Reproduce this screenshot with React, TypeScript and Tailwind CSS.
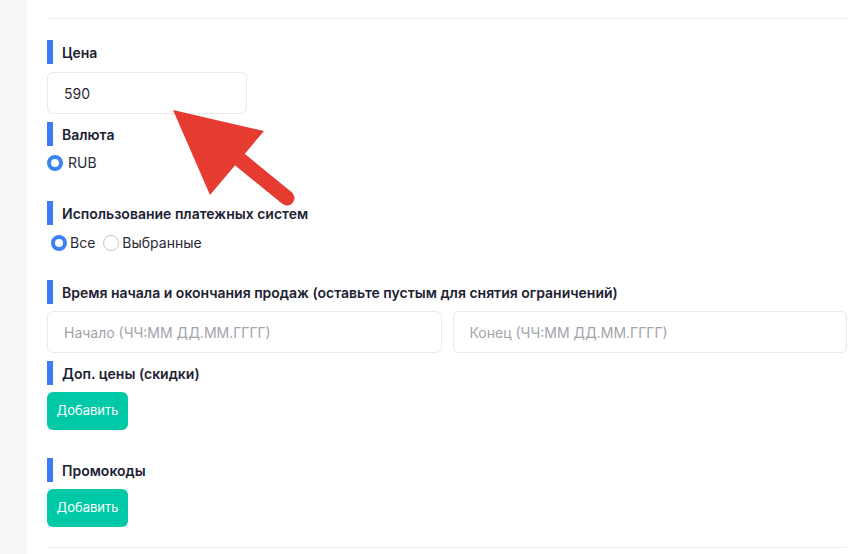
import React from "react";

function Label({ children }: { children: React.ReactNode }) {
  return (
    <div className="flex items-center h-[24px]">
      <div className="w-[6px] h-[24px] bg-[#3b7cf6]" />
      <span className="ml-[9px] mt-[1px] text-[14px] font-semibold text-[#1d2233] leading-none">{children}</span>
    </div>
  );
}

function Radio({ checked }: { checked: boolean }) {
  return checked ? (
    <span className="inline-block w-[16px] h-[16px] rounded-full border-[4px] border-[#3b82f6] bg-white box-border" />
  ) : (
    <span className="inline-block w-[16px] h-[16px] rounded-full border border-[#c8c8cc] bg-white box-border" />
  );
}

function Btn() {
  return (
    <button className="h-[38px] w-[81px] rounded-[6px] bg-[#00c9a7] text-white text-[13px] flex items-center justify-center">
      Добавить
    </button>
  );
}

export default function App() {
  return (
    <div
      className="relative flex w-[864px] h-[554px] overflow-hidden bg-white"
      style={{ fontFamily: "Inter, 'Noto Sans', sans-serif" }}
    >
      <div className="w-[27px] h-full bg-[#f7f7f7] shrink-0" />
      <div className="flex-1 pl-[20px] pr-[17px]">
        <div className="mt-[18px] h-px bg-[#ececec]" />

        <div className="mt-[21px]">
          <Label>Цена</Label>
          <div className="mt-[8px] w-[200px] h-[42px] rounded-[6px] border border-[#e9e9ee] flex items-center pl-[16px] text-[14px] text-[#2a2a35]">
            590
          </div>
        </div>

        <div className="mt-[8px]">
          <Label>Валюта</Label>
          <div className="mt-[7px] h-[20px] flex items-center text-[14px] leading-[20px] text-[#2a2a35]">
            <Radio checked />
            <span className="ml-[5px]">RUB</span>
          </div>
        </div>

        <div className="mt-[28px]">
          <Label>Использование платежных систем</Label>
          <div className="mt-[8px] h-[20px] ml-[4px] flex items-center text-[14px] leading-[20px] text-[#2a2a35]">
            <Radio checked />
            <span className="ml-[3px]">Все</span>
            <span className="ml-[8px]" />
            <Radio checked={false} />
            <span className="ml-[3px]">Выбранные</span>
          </div>
        </div>

        <div className="mt-[27px]">
          <Label>Время начала и окончания продаж (оставьте пустым для снятия ограничений)</Label>
          <div className="mt-[7px] flex gap-[11px]">
            <div className="flex-1 h-[42px] rounded-[6px] border border-[#e9e9ee] flex items-center pl-[16px] text-[14px] text-[#a3a3ab]">
              Начало (ЧЧ:ММ ДД.ММ.ГГГГ)
            </div>
            <div className="flex-1 h-[42px] rounded-[6px] border border-[#e9e9ee] flex items-center pl-[16px] text-[14px] text-[#a3a3ab]">
              Конец (ЧЧ:ММ ДД.ММ.ГГГГ)
            </div>
          </div>
        </div>

        <div className="mt-[8px]">
          <Label>Доп. цены (скидки)</Label>
          <div className="mt-[7px]">
            <Btn />
          </div>
        </div>

        <div className="mt-[28px]">
          <Label>Промокоды</Label>
          <div className="mt-[7px]">
            <Btn />
          </div>
        </div>

        <div className="mt-[20px] h-px bg-[#ececec]" />
      </div>

      <svg className="absolute left-0 top-0 pointer-events-none" width="864" height="554">
        <polygon points="173,110 264,131 210,195" fill="#e53b30" />
        <line x1="222" y1="145" x2="287" y2="198" stroke="#e53b30" strokeWidth="15" strokeLinecap="round" />
      </svg>
    </div>
  );
}
